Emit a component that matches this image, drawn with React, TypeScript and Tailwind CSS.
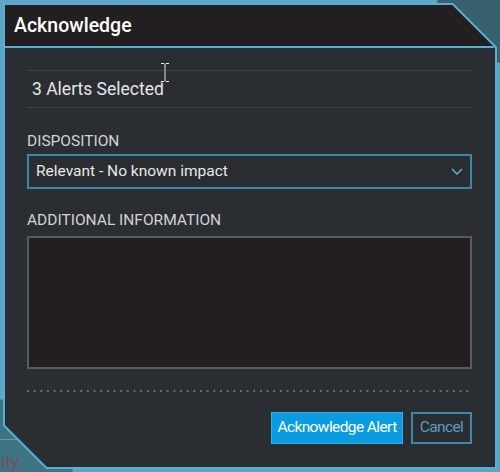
import React from 'react'

export default function App() {
  return (
    <div className="relative h-[472px] w-[500px] overflow-hidden bg-[#5ba6c7] p-[3px] font-['Roboto',sans-serif] bg-[radial-gradient(circle_at_100%_0%,#37616f_62px,transparent_63px),radial-gradient(circle_at_0%_100%,#3d7481_72px,transparent_73px)]">
      {/* bits of the page under the dialog */}
      <div className="absolute bottom-[32px] left-0 h-px w-[24px] bg-[#5aa0a8]" />
      <span className="absolute bottom-[1px] left-[1px] text-[17px] leading-none text-[#7d4b60]">ity</span>

      {/* Dialog frame */}
      <div className="relative h-full w-full bg-[#5aaed3] p-[2px] [clip-path:polygon(0_0,calc(100%-44px)_0,100%_44px,100%_100%,43px_100%,0_calc(100%-43px))]">
        <div className="flex h-full w-full flex-col bg-[#2a2e32] [clip-path:polygon(0_0,calc(100%-43px)_0,100%_43px,100%_100%,42px_100%,0_calc(100%-42px))]">
          {/* Header */}
          <div className="flex h-[43px] shrink-0 items-center border-b-2 border-[#5aaed3] bg-[#231f20] pl-[9px]">
            <h1 className="text-[19.5px] font-medium text-white">Acknowledge</h1>
          </div>

          {/* Body */}
          <div className="relative flex flex-col pl-[22px] pr-[23px]">
            <div className="mt-[22px] flex h-[38px] items-center border-y border-[#3a424c] pl-[5px] text-[17.5px] text-[#e6e6e6]">
              3 Alerts Selected
            </div>

            {/* text cursor */}
            <svg className="absolute left-[155px] top-[14px]" width="10" height="21" viewBox="0 0 10 21">
              <path d="M1 1.5h3l1 1 1-1h3M5 2.5v16M1 19.5h3l1-1 1 1h3" fill="none" stroke="#222" strokeWidth="2.2" />
              <path d="M1 1.5h3l1 1 1-1h3M5 2.5v16M1 19.5h3l1-1 1 1h3" fill="none" stroke="#f2f2f2" strokeWidth="1" />
            </svg>

            <label className="mt-[24px] text-[15.5px] leading-[18px] text-[#d2d2d2]">DISPOSITION</label>
            <div className="mt-[4px] flex h-[35px] items-center justify-between border-2 border-[#3b86a8] bg-[#292d31] pl-[7px] pr-[7px] text-[15.5px] text-[#e8e8e8]">
              <span>Relevant - No known impact</span>
              <svg width="12" height="7" viewBox="0 0 12 7">
                <path d="M1 1l5 5 5-5" fill="none" stroke="#5ab0d8" strokeWidth="1.5" />
              </svg>
            </div>

            <label className="mt-[22px] text-[15.5px] leading-[18px] text-[#d2d2d2]">ADDITIONAL INFORMATION</label>
            <div className="mt-[7px] h-[133px] border-2 border-[#585c60] bg-[#231f20]" />

            <div className="mt-[21px] h-[2px] bg-[linear-gradient(to_right,#5c7478_2px,transparent_2px)] bg-[length:6.67px_2px]" />

            <div className="mt-[20px] flex justify-end gap-[8px]">
              <button className="h-[32px] w-[132px] border border-[#2fb0ee] bg-[#0b9be0] text-[15.5px] tracking-[-0.6px] text-white">
                Acknowledge Alert
              </button>
              <button className="h-[32px] w-[61px] border-2 border-[#3f88aa] bg-transparent text-[15.5px] tracking-[-0.6px] text-[#5a9cbc]">
                Cancel
              </button>
            </div>
          </div>
        </div>
      </div>
    </div>
  )
}
